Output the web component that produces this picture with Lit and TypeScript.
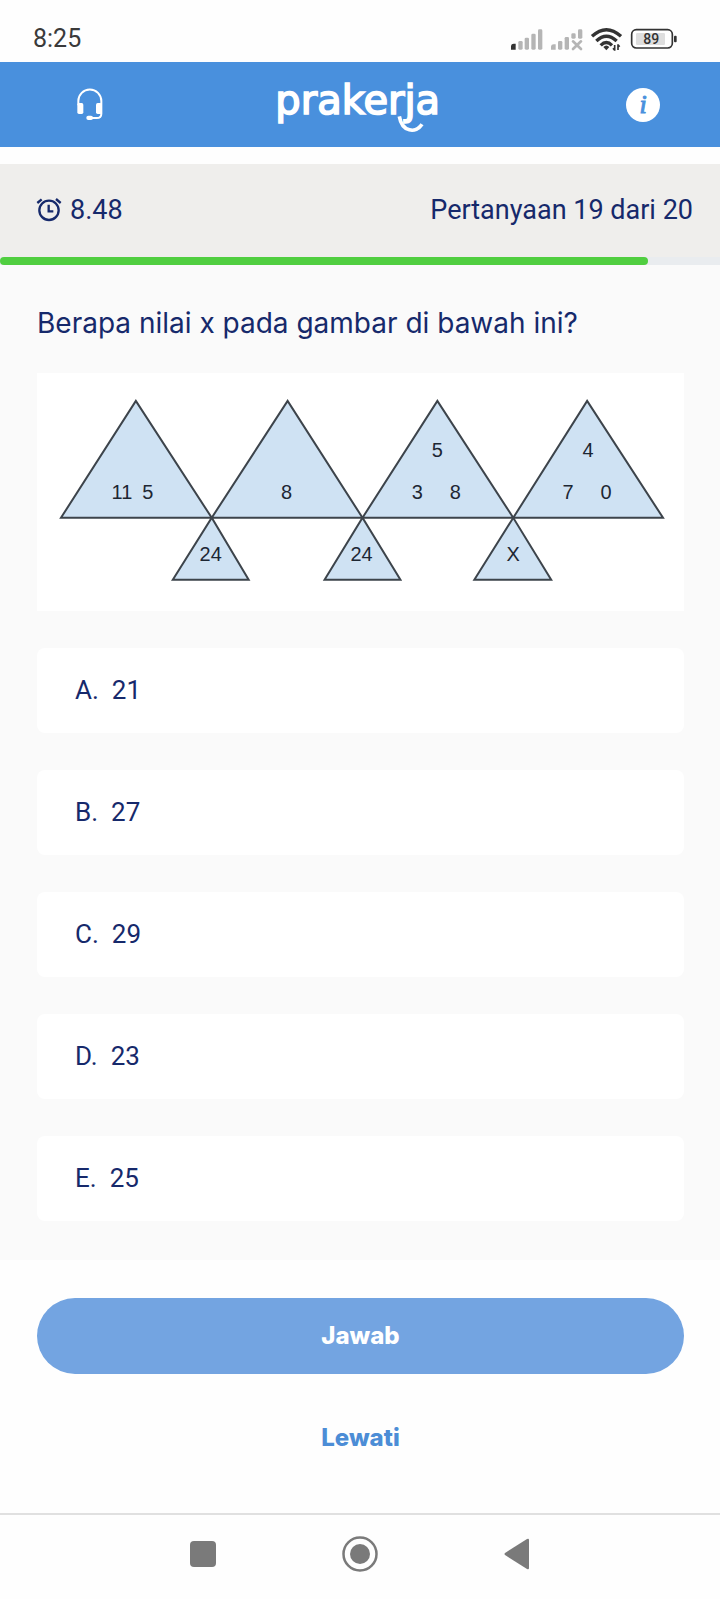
import { LitElement, html, svg, css } from "lit";
import { customElement, property, state } from "lit/decorators.js";

interface Shape {
  points: string;
}

interface Mark {
  x: number;
  y: number;
  text: string;
}

const SHAPES: Shape[] = [
  { points: "24,145 99,28 175,145" },
  { points: "175,145 251,28 326,145" },
  { points: "326,145 401,28 477,145" },
  { points: "477,145 551,28 627,145" },
  { points: "136,207 175,145 212,207" },
  { points: "288,207 326,145 364,207" },
  { points: "438,207 477,145 515,207" },
];

const MARKS: Mark[] = [
  { x: 85, y: 126, text: "11" },
  { x: 111, y: 126, text: "5" },
  { x: 250, y: 126, text: "8" },
  { x: 401, y: 84, text: "5" },
  { x: 381, y: 126, text: "3" },
  { x: 419, y: 126, text: "8" },
  { x: 552, y: 84, text: "4" },
  { x: 532, y: 126, text: "7" },
  { x: 570, y: 126, text: "0" },
  { x: 174, y: 188, text: "24" },
  { x: 325, y: 188, text: "24" },
  { x: 477, y: 188, text: "X" },
];

@customElement("status-bar")
class StatusBar extends LitElement {
  static styles = css`
    :host {
      display: flex;
      align-items: center;
      justify-content: space-between;
      box-sizing: border-box;
      height: 62px;
      padding: 16px 42px 0 33px;
      background: #fefefe;
      color: #3a3a3a;
      font: 400 25px/30px Roboto, sans-serif;
    }
    .icons {
      display: flex;
      align-items: center;
      gap: 7px;
    }
    svg {
      display: block;
    }
    .level {
      font: 500 42px Roboto, sans-serif;
      text-anchor: middle;
    }
  `;

  render() {
    return html`
      <span>8:25</span>
      <div class="icons">
        <svg width="33" height="23" viewBox="60 51 99 69" fill="#b5b5b5" aria-hidden="true">
          <path d="M63 116V104q1-6 8-6h6v18z" fill="#333" />
          <rect x="85" y="90" width="13" height="26" rx="4" />
          <rect x="104" y="80" width="13" height="36" rx="4" />
          <rect x="124" y="68" width="13" height="48" rx="4" />
          <rect x="144" y="55" width="13" height="61" rx="4" />
        </svg>
        <svg width="33" height="23" viewBox="180 51 99 69" fill="#b5b5b5" aria-hidden="true">
          <path d="M183 116V106q1-6 8-6h6v16z" />
          <rect x="204" y="90" width="13" height="26" rx="4" />
          <rect x="224" y="78" width="13" height="38" rx="4" />
          <rect x="244" y="67" width="13" height="16" rx="4" />
          <rect x="264" y="55" width="13" height="28" rx="4" />
          <path d="M249 91L273 114M273 91L249 114" stroke="#b5b5b5" stroke-width="8" stroke-linecap="round" />
        </svg>
        <svg width="33" height="25" viewBox="300 48 99 75" fill="none" stroke="#333" stroke-width="10" aria-hidden="true">
          <path d="M306 76Q349 36 393 76" />
          <path d="M319 90Q349 61 380 90" />
          <path d="M332 103Q349 86 366 103" />
          <path d="M340 108Q349 99 358 108L349 118z" fill="#333" stroke="none" />
          <path d="M374 119V102M369 112l5 6M384 100V117M389 107l-5-6" stroke-width="5" />
        </svg>
        <svg width="48" height="22" viewBox="423 51 144 66" role="img" aria-label="89%">
          <rect x="428" y="56" width="122" height="55" rx="14" fill="none" stroke="#333" stroke-width="5" />
          <rect x="441" y="66" width="87" height="36" rx="4" fill="#dedede" />
          <rect x="555" y="74" width="8" height="20" rx="3" fill="#333" />
          <text class="level" x="487" y="99" fill="#333">89</text>
        </svg>
      </div>
    `;
  }
}

@customElement("brand-bar")
class BrandBar extends LitElement {
  static styles = css`
    :host {
      display: grid;
      grid-template-columns: 1fr auto 1fr;
      align-items: center;
      height: 85px;
      padding: 0 60px;
      background: #4990dd;
      border-bottom: 17px solid #fefefe;
    }
    svg {
      display: block;
    }
    button {
      padding: 0;
      border: 0;
      cursor: pointer;
    }
    .help {
      display: grid;
      place-items: center;
      width: 60px;
      height: 60px;
      background: none;
    }
    .info {
      justify-self: end;
      width: 34px;
      height: 34px;
      border-radius: 50%;
      background: #fff;
      color: #4990dd;
      font: italic 26px/32px "Liberation Serif", serif;
      -webkit-text-stroke: 1px #4990dd;
    }
    .logo {
      overflow: visible;
    }
    .word {
      font: 400 120px "DejaVu Sans", sans-serif;
      stroke: #fff;
      stroke-width: 5;
    }
  `;

  render() {
    return html`
      <button class="help" aria-label="Bantuan">
        <svg width="28" height="33" viewBox="228 264 84 99" fill="#fff" aria-hidden="true">
          <path d="M235 316V303A34 34 0 0 1 304 303V341Q304 354 290 354H270" fill="none" stroke="#fff" stroke-width="6" />
          <rect x="232" y="309" width="18" height="33" rx="5" />
          <rect x="288" y="309" width="18" height="33" rx="5" />
          <rect x="259" y="347" width="20" height="13" rx="6" />
        </svg>
      </button>
      <svg class="logo" width="166" height="64" viewBox="45 0 498 192" fill="#fff">
        <text class="word" x="40" y="123">prakerja</text>
        <path d="M412 130C420 178 462 182 480 154" fill="none" stroke="#fff" stroke-width="11" />
      </svg>
      <button class="info" aria-label="Informasi">i</button>
    `;
  }
}

@customElement("quiz-progress")
class QuizProgress extends LitElement {
  @property({ type: Number }) current = 19;
  @property({ type: Number }) total = 20;

  static styles = css`
    :host {
      display: block;
      background: #efeeec;
      color: #16296b;
      font: 400 27px/32px Roboto, sans-serif;
    }
    .row {
      display: flex;
      align-items: center;
      justify-content: space-between;
      height: 93px;
      padding: 0 27px 2px 36px;
      box-sizing: border-box;
    }
    .timer {
      display: flex;
      align-items: center;
      gap: 8px;
    }
    svg {
      display: block;
    }
    .track {
      height: 8px;
      background: #e9ecef;
    }
    .fill {
      height: 8px;
      border-radius: 4px;
      background: #50ce40;
    }
  `;

  render() {
    const done = ((this.current - 1) / this.total) * 100;
    return html`
      <div class="row">
        <span class="timer">
          <svg width="26" height="25" viewBox="108 114 78 75" fill="none" stroke="#16296b" stroke-width="7" aria-hidden="true">
            <circle cx="147" cy="154" r="29" />
            <path d="M146 137V157H160M112 132L125 121M182 132L168 120" />
          </svg>
          <span>8.48</span>
        </span>
        <span>Pertanyaan ${this.current} dari ${this.total}</span>
      </div>
      <div class="track"><div class="fill" style="width:${done}%"></div></div>
    `;
  }
}

@customElement("triangle-figure")
class TriangleFigure extends LitElement {
  static styles = css`
    :host {
      display: block;
      background: #fff;
    }
    svg {
      display: block;
      width: 100%;
    }
    polygon {
      fill: #cfe2f3;
      stroke: #3d444b;
      stroke-width: 2;
    }
    text {
      fill: #1d2733;
      font: 20px "Liberation Sans", sans-serif;
      text-anchor: middle;
    }
  `;

  render() {
    return html`
      <svg viewBox="0 0 648 238">
        ${SHAPES.map((s) => svg`<polygon points=${s.points} />`)}
        ${MARKS.map((m) => svg`<text x=${m.x} y=${m.y}>${m.text}</text>`)}
      </svg>
    `;
  }
}

@customElement("system-nav")
class SystemNav extends LitElement {
  static styles = css`
    :host {
      display: flex;
      justify-content: center;
      gap: 96px;
      padding: 9px 0 14px;
      border-top: 2px solid #e0e0e0;
      background: #fefefe;
    }
    button {
      display: grid;
      place-items: center;
      width: 61px;
      height: 61px;
      padding: 0;
      border: 0;
      background: none;
    }
    svg {
      display: block;
    }
  `;

  render() {
    return html`
      <button aria-label="Aplikasi terbaru">
        <svg width="36" height="36" fill="#7a7a7a"><rect x="5" y="5" width="26" height="26" rx="4" /></svg>
      </button>
      <button aria-label="Beranda">
        <svg width="36" height="36" fill="#7a7a7a">
          <circle cx="18" cy="18" r="16.5" fill="none" stroke="#7a7a7a" stroke-width="2.5" />
          <circle cx="18" cy="18" r="10" />
        </svg>
      </button>
      <button aria-label="Kembali">
        <svg width="36" height="36" fill="#7a7a7a"><path d="M6 17Q5 18 6 19L28 33Q30 34 30 32V4Q30 2 28 3Z" /></svg>
      </button>
    `;
  }
}

@customElement("app-root")
class AppRoot extends LitElement {
  @state() private chosen = "";

  private options = [
    { key: "A", value: "21" },
    { key: "B", value: "27" },
    { key: "C", value: "29" },
    { key: "D", value: "23" },
    { key: "E", value: "25" },
  ];

  static styles = css`
    :host {
      display: block;
      background: #fefefe;
      color: #16296b;
      font: 400 26px/32px Roboto, sans-serif;
    }
    .body {
      padding: 42px 36px 39px 37px;
      background: #fafafa;
    }
    .question {
      margin: 0 0 34px;
      font: 400 28px/32px Inter, sans-serif;
    }
    .answers {
      display: grid;
      gap: 37px;
      margin: 37px 0 0;
      padding: 0;
      border: 0;
    }
    .answer {
      display: flex;
      align-items: center;
      gap: 13px;
      box-sizing: border-box;
      height: 85px;
      padding: 0 38px;
      border-radius: 8px;
      background: #fff;
      cursor: pointer;
    }
    .answer:has(:checked) {
      background: #dbe9fa;
    }
    .radio {
      appearance: none;
      width: 0;
      height: 0;
      margin: 0 -13px 0 0;
    }
    .actions {
      display: grid;
      gap: 26px;
      padding: 38px 36px 37px 37px;
    }
    .submit,
    .skip {
      height: 76px;
      border: 0;
      border-radius: 38px;
      font: 800 24px/28px Inter, sans-serif;
      cursor: pointer;
    }
    .submit {
      background: #73a4e1;
      color: #fff;
    }
    .skip {
      justify-self: center;
      padding: 0 24px;
      background: none;
      color: #4c8dd6;
    }
  `;

  render() {
    return html`
      <status-bar></status-bar>
      <brand-bar></brand-bar>
      <quiz-progress .current=${19} .total=${20}></quiz-progress>
      <main class="body">
        <h1 class="question">Berapa nilai x pada gambar di bawah ini?</h1>
        <triangle-figure></triangle-figure>
        <fieldset class="answers" aria-label="Pilihan jawaban">
          ${this.options.map(
            (o) => html`
              <label class="answer">
                <input
                  class="radio"
                  type="radio"
                  name="answer"
                  .checked=${this.chosen === o.key}
                  @change=${() => (this.chosen = o.key)}
                />
                <span>${o.key}.</span>
                <span>${o.value}</span>
              </label>
            `
          )}
        </fieldset>
      </main>
      <div class="actions">
        <button class="submit">Jawab</button>
        <button class="skip">Lewati</button>
      </div>
      <system-nav></system-nav>
    `;
  }
}
